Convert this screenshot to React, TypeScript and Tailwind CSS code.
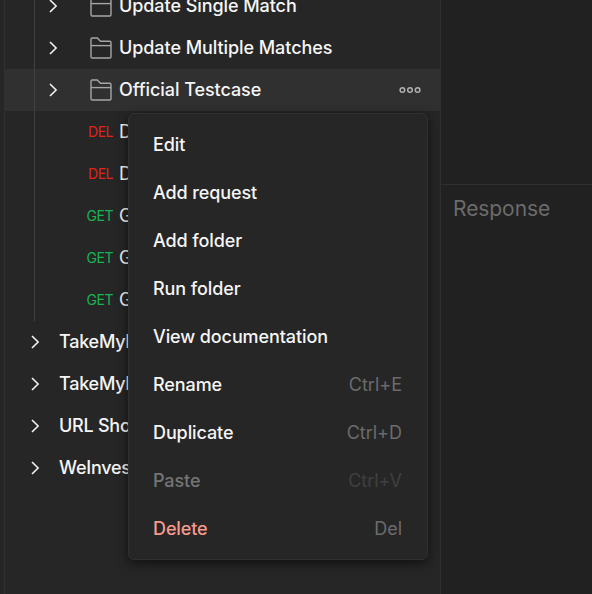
type MenuItem = { label: string; shortcut?: string; tone?: 'disabled' | 'danger' };

const folders = [
  { name: 'Update Single Match' },
  { name: 'Update Multiple Matches' },
  { name: 'Official Testcase', active: true },
];

const requests = [
  { method: 'DEL', name: 'D' },
  { method: 'DEL', name: 'D' },
  { method: 'GET', name: 'G' },
  { method: 'GET', name: 'G' },
  { method: 'GET', name: 'G' },
];

const collections = ['TakeMyI', 'TakeMyI', 'URL Sho', 'WeInves'];

const menuItems: MenuItem[] = [
  { label: 'Edit' },
  { label: 'Add request' },
  { label: 'Add folder' },
  { label: 'Run folder' },
  { label: 'View documentation' },
  { label: 'Rename', shortcut: 'Ctrl+E' },
  { label: 'Duplicate', shortcut: 'Ctrl+D' },
  { label: 'Paste', shortcut: 'Ctrl+V', tone: 'disabled' },
  { label: 'Delete', shortcut: 'Del', tone: 'danger' },
];

function Chevron() {
  return (
    <svg className="size-4 shrink-0" viewBox="0 0 16 16" fill="none" stroke="#f2f2f2" strokeWidth="1.6">
      <path d="M5 2 L11.1 8 L5 14" />
    </svg>
  );
}

function Folder() {
  return (
    <svg className="h-6 w-6 shrink-0" viewBox="0 0 24 24" fill="none" stroke="#a6a6a6" strokeWidth="1.4">
      <path d="M2 3.2 Q2 2 3.2 2 H8.3 L11.5 5.2 H20.8 Q22 5.2 22 6.4 V20.8 Q22 22 20.8 22 H3.2 Q2 22 2 20.8 Z" />
      <path d="M2 9.6 H22" />
    </svg>
  );
}

function Dots() {
  return (
    <svg className="mr-[19px] ml-auto h-2 w-[22px]" viewBox="0 0 22 8" fill="none" stroke="#b0b0b0" strokeWidth="1.5">
      <circle cx="3.4" cy="4" r="2.3" />
      <circle cx="11" cy="4" r="2.3" />
      <circle cx="18.6" cy="4" r="2.3" />
    </svg>
  );
}

function ContextMenu() {
  return (
    <div className="absolute top-[113px] left-[128px] h-[447px] w-[300px] rounded-md border border-[#303030] bg-[#262626] py-[7px] shadow-[0_3px_12px_rgba(0,0,0,0.6)]">
      {menuItems.map((item) => (
        <div
          key={item.label}
          className={`flex h-12 items-center justify-between pr-[25px] pl-6 ${
            item.tone === 'disabled' ? 'text-[#757575]' : item.tone === 'danger' ? 'text-[#f79a8e]' : ''
          }`}
        >
          <span className="font-medium tracking-[-0.1px]">{item.label}</span>
          {item.shortcut && (
            <span className={item.tone === 'disabled' ? 'text-[#404040]' : 'text-[#6b6b6b]'}>{item.shortcut}</span>
          )}
        </div>
      ))}
    </div>
  );
}

export default function App() {
  return (
    <div className="relative flex h-[594px] w-[592px] overflow-hidden bg-[#262626] font-['Inter',sans-serif] text-[18px] leading-6 text-[#f5f5f5]">
      <aside className="ml-1 w-[437px] shrink-0 overflow-hidden border-x border-[#303030] font-medium tracking-[-0.07px]">
        <div className="-mt-[15px]">
          <div className="h-[336px]">
            {folders.map((f) => (
              <div key={f.name} className={`flex h-[42px] ${f.active ? 'bg-[#303030]' : ''}`}>
                <div className="ml-[29px] w-px bg-[#404040]" />
                <div className="flex flex-1 items-center pl-[10px]">
                  <Chevron />
                  <div className="ml-7 flex">
                    <Folder />
                  </div>
                  <span className="ml-1.5">{f.name}</span>
                  {f.active && <Dots />}
                </div>
              </div>
            ))}
            {requests.map((r, i) => (
              <div key={i} className="flex h-[42px]">
                <div className="ml-[29px] w-px bg-[#404040]" />
                <div className="flex items-center">
                  <span
                    className={`w-[78px] text-right text-[14px] font-normal tracking-[-0.5px] ${
                      r.method === 'DEL' ? 'text-[#e32219]' : 'text-[#16b453]'
                    }`}
                  >
                    {r.method}
                  </span>
                  <span className="ml-1.5 font-normal">{r.name}</span>
                </div>
              </div>
            ))}
          </div>
          {collections.map((name, i) => (
            <div key={i} className="flex h-[42px] items-center pl-[22px]">
              <Chevron />
              <span className="ml-4 tracking-[-0.25px]">{name}</span>
            </div>
          ))}
        </div>
      </aside>
      <main className="flex flex-1 flex-col bg-[#212121]">
        <div className="h-[185px] border-b border-[#303030]" />
        <div className="pt-3 pl-3 text-[21px] tracking-[-0.07px] text-[#6b6b6b]">Response</div>
      </main>
      <ContextMenu />
    </div>
  );
}
